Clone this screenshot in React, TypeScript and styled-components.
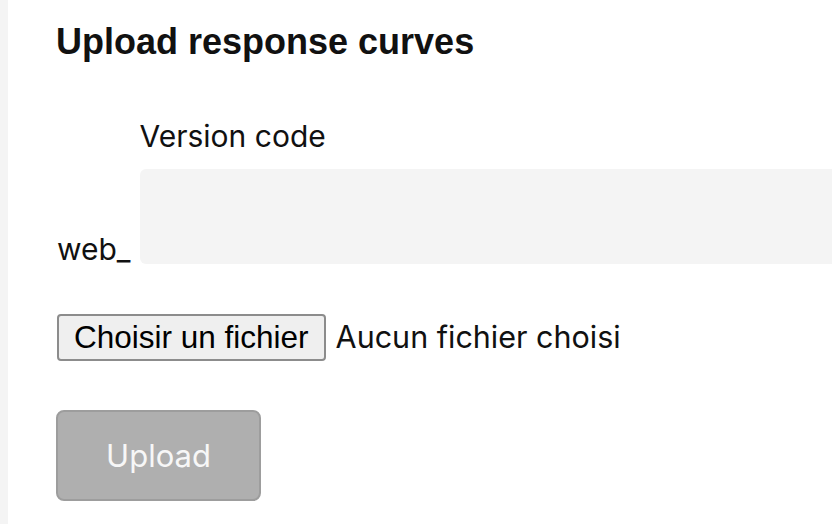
import React, { useState } from "react";
import styled, { createGlobalStyle } from "styled-components";

const GlobalStyle = createGlobalStyle`
  body {
    margin: 0;
    background: #ffffff;
    overflow: hidden;
    font-family: Inter, "Noto Sans", sans-serif;
    color: #111111;
  }
`;

const Page = styled.div`
  display: flex;
  min-height: 100vh;
`;

const SideStrip = styled.div`
  width: 8px;
  flex-shrink: 0;
  background: #f4f4f4;
`;

const Main = styled.main`
  display: flex;
  flex-direction: column;
  padding: 24px 0 0 48px;
`;

const Title = styled.h2`
  margin: 0;
  font-family: "Liberation Sans", Arial, sans-serif;
  font-weight: 700;
  font-size: 36px;
  line-height: 35px;
  color: #111111;
`;

const FieldRow = styled.div`
  display: flex;
  align-items: flex-end;
  gap: 9px;
  margin-top: 60px;
`;

const Prefix = styled.span`
  font-size: 30px;
  line-height: 29px;
  padding-left: 1px;
`;

const FieldColumn = styled.div`
  display: flex;
  flex-direction: column;
  gap: 15px;
`;

const Label = styled.label`
  font-size: 30px;
  line-height: 35px;
`;

const TextInput = styled.input`
  width: 720px;
  height: 95px;
  box-sizing: border-box;
  border: none;
  border-radius: 6px 0 0 6px;
  background: #f4f4f4;
  padding: 0 16px;
  font-family: inherit;
  font-size: 30px;
  outline: none;
`;

const FileRow = styled.div`
  display: flex;
  align-items: center;
  gap: 10px;
  margin-top: 50px;
`;

const FileButton = styled.button`
  height: 47px;
  box-sizing: border-box;
  padding: 0 15px;
  margin-left: 1px;
  border: 2px solid #8c8c8c;
  border-radius: 4px;
  background: #efefef;
  font-family: "Liberation Sans", Arial, sans-serif;
  font-size: 31.5px;
  color: #000000;
  cursor: pointer;
`;

const FileName = styled.span`
  font-size: 30.5px;
  line-height: 1;
  color: #111111;
`;

const UploadButton = styled.button`
  margin-top: 49px;
  width: 205px;
  height: 91px;
  box-sizing: border-box;
  border: 2px solid #9d9d9d;
  border-radius: 8px;
  background: #afafaf;
  font-family: Inter, "Noto Sans", sans-serif;
  font-size: 31px;
  color: #f7f7f7;
  cursor: default;
`;

export default function App() {
  const [version, setVersion] = useState("");
  const [fileName] = useState<string | null>(null);

  return (
    <>
      <GlobalStyle />
      <Page>
        <SideStrip />
        <Main>
          <Title>Upload response curves</Title>
          <FieldRow>
            <Prefix>web_</Prefix>
            <FieldColumn>
              <Label htmlFor="version">Version code</Label>
              <TextInput
                id="version"
                value={version}
                onChange={(e) => setVersion(e.target.value)}
              />
            </FieldColumn>
          </FieldRow>
          <FileRow>
            <FileButton type="button">Choisir un fichier</FileButton>
            <FileName>{fileName ?? "Aucun fichier choisi"}</FileName>
          </FileRow>
          <div>
            <UploadButton type="button" disabled>
              Upload
            </UploadButton>
          </div>
        </Main>
      </Page>
    </>
  );
}
